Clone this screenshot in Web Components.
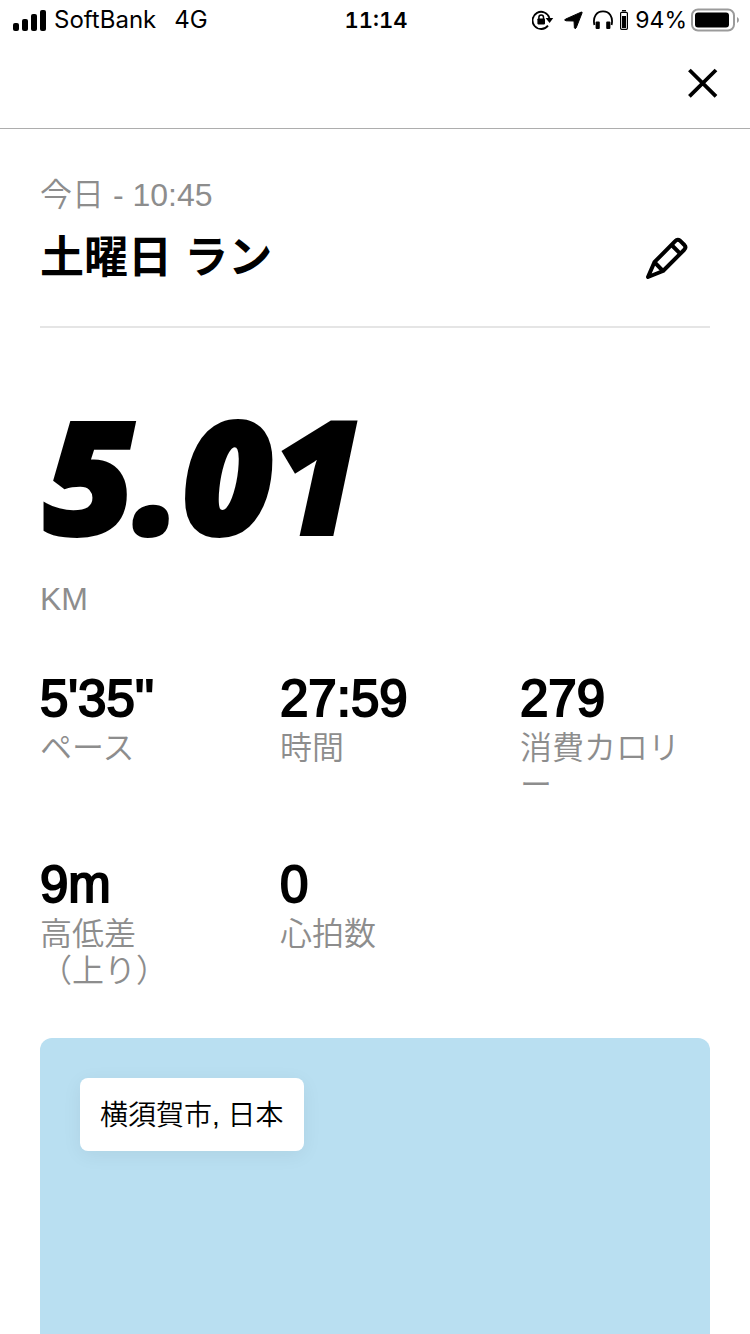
<!DOCTYPE html>
<html lang="ja">
  <head>
    <meta charset="UTF-8" />
    <meta name="viewport" content="width=device-width, initial-scale=1.0" />
    <title>土曜日 ラン</title>
    <style>
      body {
        margin: 0;
        background: #fff;
        color: #000;
        font-family: "Liberation Sans", "Noto Sans CJK JP", sans-serif;
        --muted: #8d8d8d;
      }
    </style>
  </head>
  <body>
    <run-page>
      <status-bar slot="top" carrier="SoftBank" network="4G" time="11:14" battery="94%"></status-bar>
      <nav-bar slot="top"></nav-bar>
      <run-title>
        <span slot="date">今日 - 10:45</span>
        土曜日 ラン
      </run-title>
      <run-distance unit="KM">5.01</run-distance>
      <stat-grid>
        <run-stat label="ペース">5'35''</run-stat>
        <run-stat label="時間">27:59</run-stat>
        <run-stat label="消費カロリー">279</run-stat>
        <run-stat label="高低差（上り）">9m</run-stat>
        <run-stat label="心拍数">0</run-stat>
      </stat-grid>
      <route-map>横須賀市, 日本</route-map>
    </run-page>
  </body>
  <script>
    // Shared base: renders the class's markup into an open shadow root
    class BaseElement extends HTMLElement {
      constructor() {
        super();
        this.attachShadow({ mode: "open" });
        this.shadowRoot.innerHTML = this.render();
      }
      attr(name) {
        return this.getAttribute(name) || "";
      }
    }

    class RunPage extends BaseElement {
      render() {
        return `
          <style>
            :host {
              display: flex;
              flex-direction: column;
              min-height: 100vh;
            }
            main {
              flex: 1;
              display: flex;
              flex-direction: column;
              padding: 46px 40px 0;
            }
          </style>
          <slot name="top"></slot>
          <main><slot></slot></main>
        `;
      }
    }

    class StatusBar extends BaseElement {
      render() {
        return `
          <style>
            :host {
              display: grid;
              grid-template-columns: 1fr auto 1fr;
              align-items: center;
              height: 40px;
              padding: 0 11px 0 13px;
              font: 24px/40px Inter, sans-serif;
            }
            div {
              display: flex;
              align-items: center;
            }
            .signal {
              margin-right: 8px;
            }
            .network {
              margin-left: 18px;
            }
            .time {
              font-size: 22px;
              font-weight: 600;
              font-variant-numeric: tabular-nums;
            }
            .right {
              justify-content: flex-end;
              font-size: 23px;
            }
            .lock,
            .arrow {
              margin-right: 10px;
            }
            .phones,
            .level {
              margin-right: 7px;
            }
            .battery {
              margin-left: 4px;
            }
            svg {
              flex: none;
            }
          </style>
          <div>
            <svg class="signal" width="33" height="21" viewBox="0 0 33 21" aria-hidden="true">
              <rect x="0" y="13" width="6" height="8" rx="2" />
              <rect x="9" y="9" width="6" height="12" rx="2" />
              <rect x="18" y="4" width="6" height="17" rx="2" />
              <rect x="27" y="0" width="6" height="21" rx="2" />
            </svg>
            <span>${this.attr("carrier")}</span>
            <span class="network">${this.attr("network")}</span>
          </div>
          <span class="time">${this.attr("time")}</span>
          <div class="right">
            <svg class="lock" width="22" height="20" viewBox="0 0 22 20" aria-hidden="true">
              <path d="M16 15.6A8.6 8.6 0 1 1 17.4 8" fill="none" stroke="#000" stroke-width="1.8" />
              <path d="M13.6 8h7.6l-3.6 5z" />
              <rect x="5.4" y="8.4" width="7.6" height="6" rx="0.8" />
              <path d="M6.9 9V7.2a2.3 2.3 0 0 1 4.6 0V9" fill="none" stroke="#000" stroke-width="1.5" />
            </svg>
            <svg class="arrow" width="19" height="19" viewBox="0 0 19 19" aria-hidden="true">
              <path d="M17 1.2Q18.6.6 18 2L12.2 16.8Q11.2 18.6 10.4 16.8L10 10 2 9.8Q-.4 9.2 1.4 8.2z" stroke="#000" stroke-width="1" />
            </svg>
            <svg class="phones" width="20" height="20" viewBox="0 0 20 20" aria-hidden="true">
              <path d="M1.4 15C-.4 7 3.4 1.4 10 1.4S20.4 7 18.6 15" fill="none" stroke="#000" stroke-width="1.8" />
              <rect x="2.6" y="11.6" width="4.2" height="7.4" rx="1" />
              <rect x="13.2" y="11.6" width="4.2" height="7.4" rx="1" />
            </svg>
            <svg class="level" width="8" height="20" viewBox="0 0 8 20" aria-hidden="true">
              <rect x="2" y="0" width="4" height="1.4" />
              <rect x="0.6" y="2.3" width="6.8" height="17" rx="1" fill="none" stroke="#000" stroke-width="1.2" />
              <rect x="2" y="6" width="4" height="12" />
            </svg>
            <span>${this.attr("battery")}</span>
            <svg class="battery" width="48" height="24" viewBox="0 0 48 24" aria-hidden="true">
              <rect x="1" y="1.5" width="42" height="21" rx="6" fill="none" stroke="#9b9b9b" stroke-width="2" />
              <rect x="4" y="4.5" width="34" height="15" rx="3" />
              <path d="M46 9q2 1 2 3t-2 3z" fill="#9b9b9b" />
            </svg>
          </div>
        `;
      }
    }

    class NavBar extends BaseElement {
      render() {
        return `
          <style>
            :host {
              display: flex;
              justify-content: flex-end;
              padding: 20px 24px 22px;
              border-bottom: 1px solid #adadad;
            }
            button {
              display: flex;
              padding: 8px;
              border: 0;
              background: none;
              cursor: pointer;
            }
          </style>
          <button type="button" aria-label="閉じる">
            <svg width="30" height="30" viewBox="0 0 30 30" fill="none" stroke="#000" stroke-width="3.8">
              <path d="M1.4 2 28 28.4M28 2 1.4 28.4" />
            </svg>
          </button>
        `;
      }
    }

    class RunTitle extends BaseElement {
      render() {
        return `
          <style>
            :host {
              display: block;
              padding-bottom: 33px;
              border-bottom: 2px solid #e5e5e5;
            }
            p {
              margin: 0;
              color: var(--muted);
              font-size: 32px;
              font-weight: 350;
              line-height: 40px;
            }
            .row {
              display: flex;
              align-items: center;
              justify-content: space-between;
              height: 70px;
              margin-top: 8px;
              padding-right: 14px;
            }
            h1 {
              margin: 0;
              font-size: 44px;
              font-weight: 700;
              line-height: 60px;
            }
            button {
              display: flex;
              padding: 8px;
              border: 0;
              background: none;
              cursor: pointer;
            }
          </style>
          <p><slot name="date"></slot></p>
          <div class="row">
            <h1><slot></slot></h1>
            <button type="button" aria-label="編集">
              <svg width="42" height="42" viewBox="0 0 42 42" fill="none" stroke="#000" stroke-width="4" stroke-linejoin="round">
                <path d="M2 40 8.4 25.2 29.2 4.2Q31.5 1.6 34 3.6L38.4 8Q40.6 10.5 38 13L17 34z" />
                <path d="M25.6 8 34.2 16.6M8.4 25.2 17 34" />
              </svg>
            </button>
          </div>
        `;
      }
    }

    class RunDistance extends BaseElement {
      render() {
        return `
          <style>
            :host {
              display: block;
              padding-top: 46px;
            }
            strong {
              display: block;
              margin-bottom: 5px;
              padding-left: 4px;
              font: italic 800 156px/200px "Open Sans", sans-serif;
              -webkit-text-stroke: 4px #000;
            }
            span {
              display: block;
              color: var(--muted);
              font-size: 32px;
              line-height: 40px;
            }
          </style>
          <strong><slot></slot></strong>
          <span>${this.attr("unit")}</span>
        `;
      }
    }

    class StatGrid extends BaseElement {
      render() {
        return `
          <style>
            :host {
              display: grid;
              grid-template-columns: repeat(3, 1fr);
              gap: 50px;
              padding: 49px 0 48px;
            }
          </style>
          <slot></slot>
        `;
      }
    }

    class RunStat extends BaseElement {
      render() {
        return `
          <style>
            :host {
              display: block;
              min-width: 0;
            }
            strong {
              display: block;
              font-size: 51px;
              font-weight: 400;
              line-height: 62px;
              -webkit-text-stroke: 2px #000;
            }
            /* keep-all lets a label break before its bracket first */
            span {
              display: block;
              color: var(--muted);
              font-size: 32px;
              font-weight: 350;
              line-height: 37px;
              line-break: loose;
              word-break: keep-all;
              overflow-wrap: anywhere;
            }
          </style>
          <strong><slot></slot></strong>
          <span>${this.attr("label")}</span>
        `;
      }
    }

    class RouteMap extends BaseElement {
      render() {
        return `
          <style>
            :host {
              flex: 1;
              display: flex;
              align-items: flex-start;
              min-height: 256px;
              padding: 40px 40px 0;
              border-radius: 12px 12px 0 0;
              background: #b9dff1;
              box-sizing: border-box;
            }
            span {
              padding: 17px 20px 15px;
              border-radius: 8px;
              background: #fff;
              box-shadow: 0 4px 20px rgba(0, 0, 0, 0.06);
              font-size: 28px;
              font-weight: 350;
              line-height: 41px;
            }
          </style>
          <span><slot></slot></span>
        `;
      }
    }

    customElements.define("run-page", RunPage);
    customElements.define("status-bar", StatusBar);
    customElements.define("nav-bar", NavBar);
    customElements.define("run-title", RunTitle);
    customElements.define("run-distance", RunDistance);
    customElements.define("stat-grid", StatGrid);
    customElements.define("run-stat", RunStat);
    customElements.define("route-map", RouteMap);
  </script>
</html>
